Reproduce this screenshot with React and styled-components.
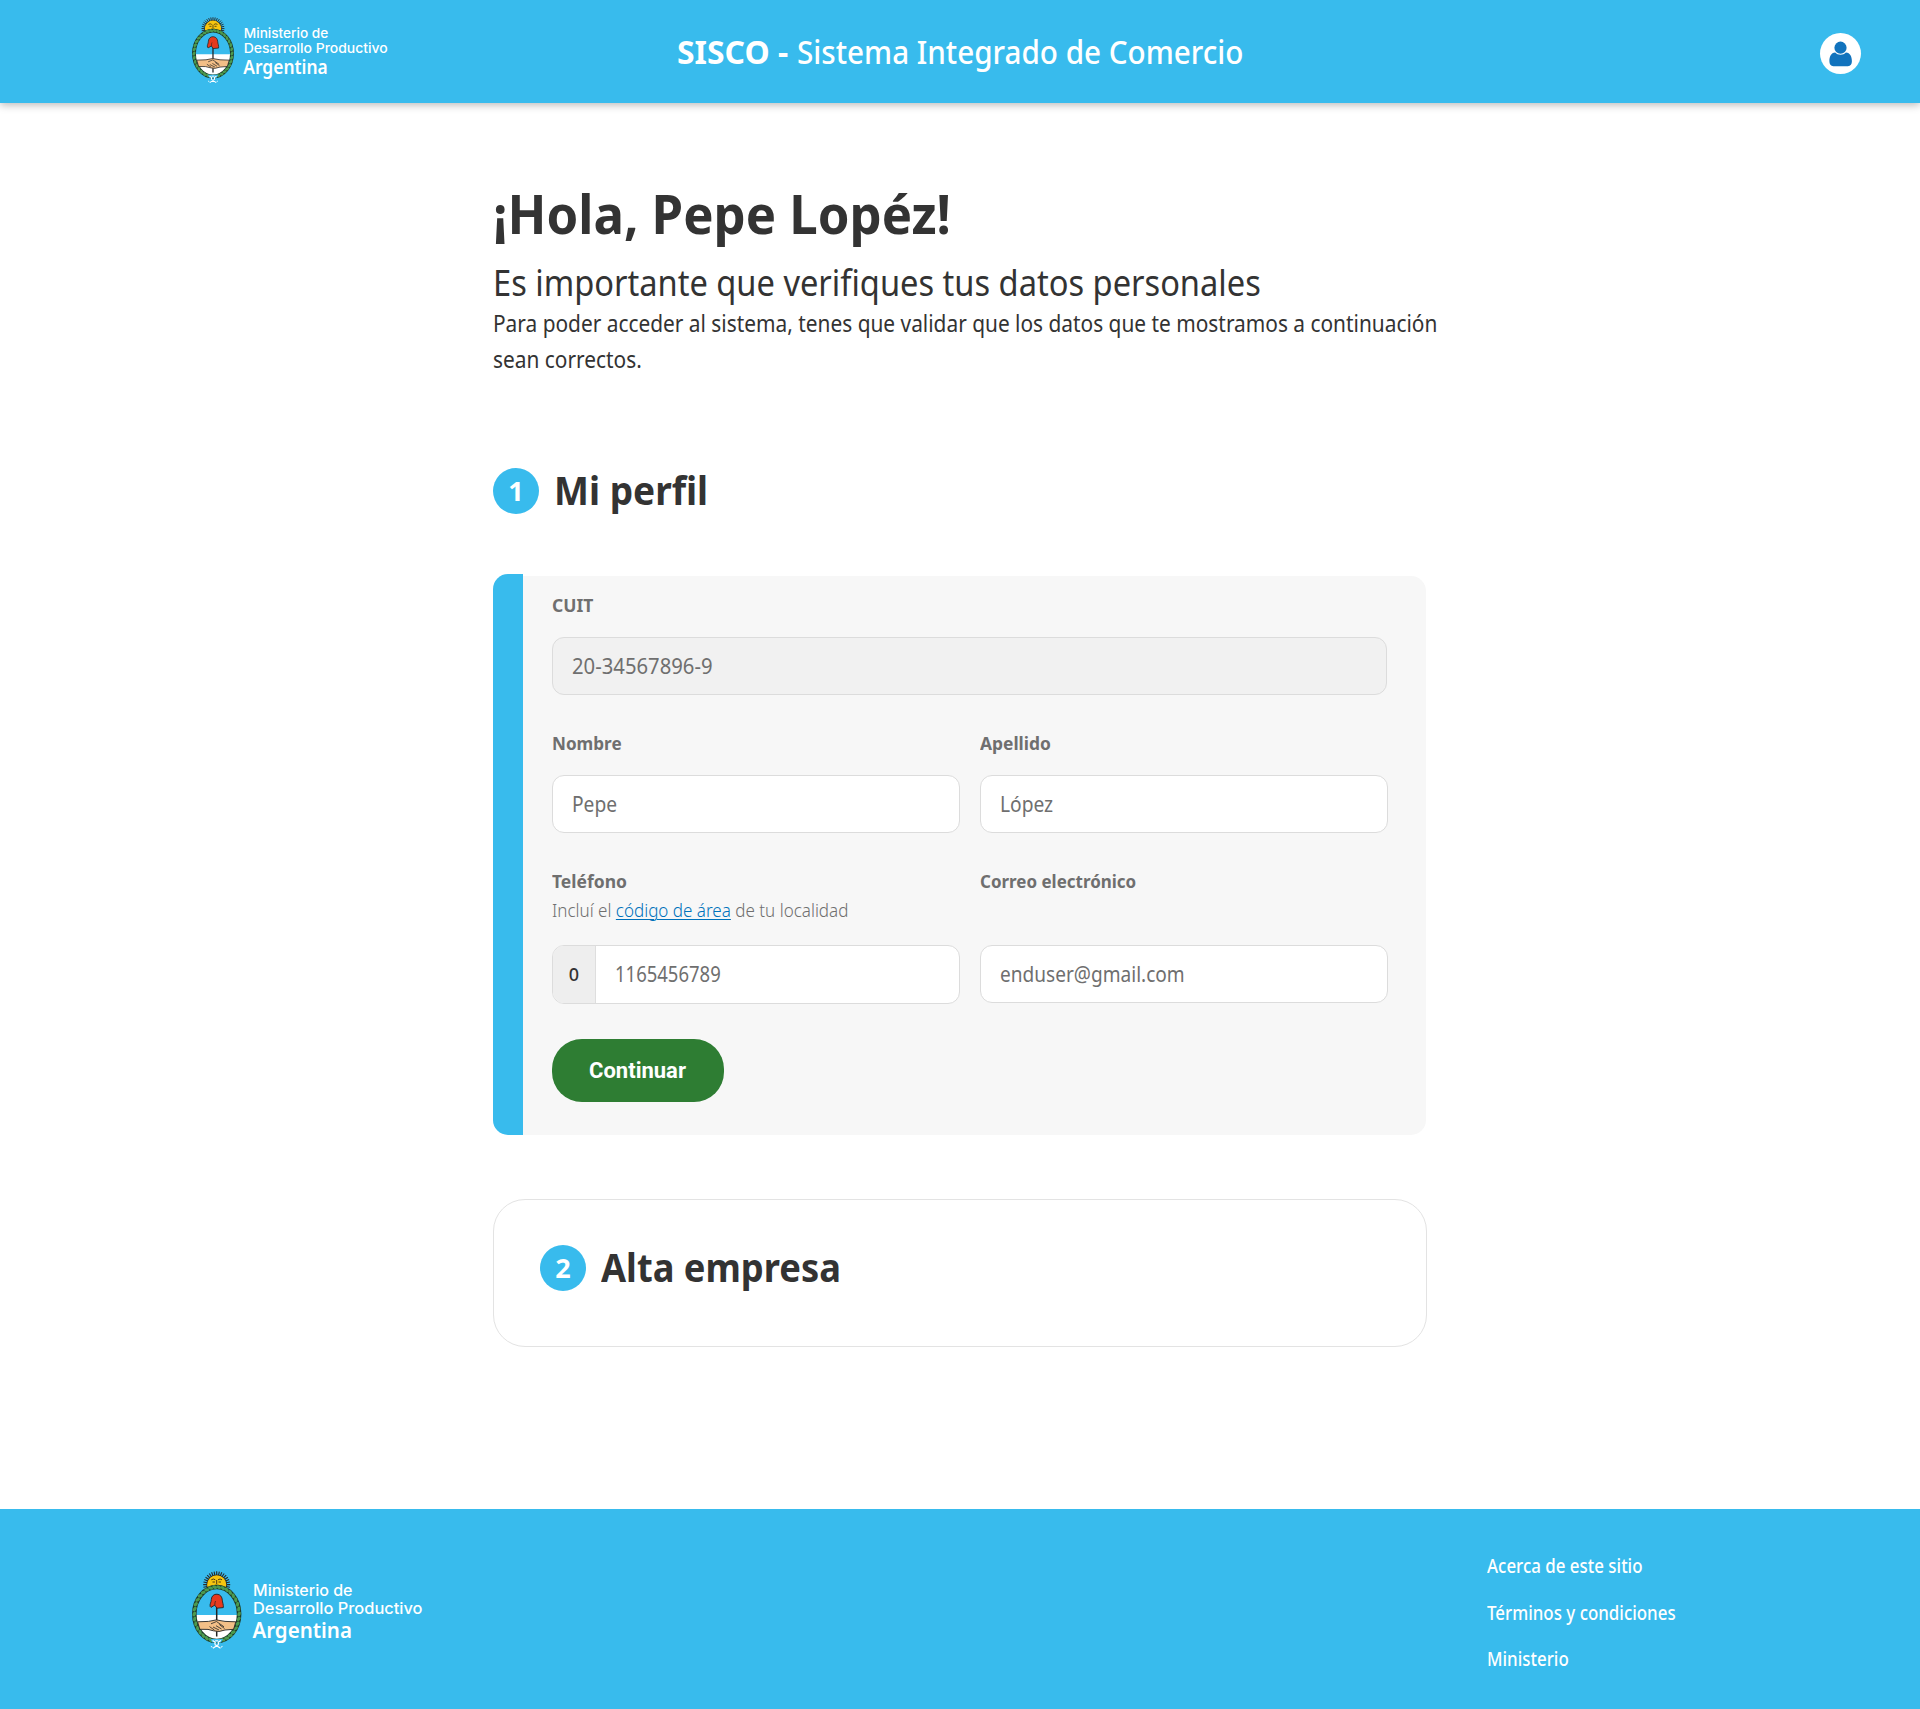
import React from 'react';
import styled, { createGlobalStyle } from 'styled-components';

const SKY = '#38bbed';
const INK = '#333333';
const GREY = '#6f6f6f';

const GlobalStyle = createGlobalStyle`
  *, *::before, *::after { box-sizing: border-box; }
  body { margin: 0; background: #fff; color: ${INK}; font-family: 'Noto Sans', 'Open Sans', sans-serif; }
  h1, h2, p { margin: 0; }
`;

/* Slightly condensed run of text */
const Narrow = styled.span`
  display: inline-block;
  white-space: nowrap;
  transform: scaleX(${p => p.$x});
  transform-origin: 0 50%;
`;

const Page = styled.div`
  display: flex;
  flex-direction: column;
  width: 1920px;
  min-height: 1709px;
  overflow: hidden;
`;

const Header = styled.header`
  display: grid;
  grid-template-columns: 485px 1fr auto;
  align-items: center;
  height: 103px;
  padding: 0 59px 0 192px;
  background: ${SKY};
  box-shadow: 0 2px 8px rgba(0, 0, 0, 0.28);
`;

const HeaderTitle = styled.div`
  display: flex;
  font-size: 33px;
  line-height: 44px;
  font-weight: 500;
  color: #fff;
`;

const Acronym = styled.strong`
  width: 120px;
  font-weight: 700;
  white-space: nowrap;
`;

const UserButton = styled.button`
  display: grid;
  place-items: center;
  width: 41px;
  height: 41px;
  margin-top: 4px;
  padding: 0;
  border: 0;
  border-radius: 50%;
  background: #fff;
`;

const HeaderLogo = styled.div`
  height: 70px;
`;

const Main = styled.main`
  width: 934px;
  margin: 78px 0 0 493px;
`;

const Greeting = styled.h1`
  font-size: 54px;
  line-height: 64px;
  font-weight: 700;
`;

const Subtitle = styled.p`
  margin-top: 15px;
  font-size: 36px;
  line-height: 45px;
`;

const Intro = styled.p`
  font-size: 23px;
  line-height: 36px;
`;

const StepTitle = styled.div`
  display: flex;
  gap: 15px;
  height: 46px;
`;

const StepNumber = styled.span`
  width: 46px;
  height: 46px;
  border-radius: 50%;
  background: ${SKY};
  color: #fff;
  font-size: 27px;
  line-height: 46px;
  font-weight: 700;
  text-align: center;
`;

const StepName = styled.h2`
  font-size: 40px;
  line-height: 43px;
  font-weight: 700;
`;

const ProfileStep = styled.section`
  margin-top: 91px;
`;

const ProfileCard = styled.div`
  display: flex;
  width: 933px;
  height: 561px;
  margin-top: 60px;
`;

const Accent = styled.div`
  width: 30px;
  border-radius: 15px 0 0 15px;
  background: ${SKY};
`;

const Form = styled.form`
  flex: 1;
  display: flex;
  flex-direction: column;
  align-items: flex-start;
  gap: 35px;
  margin-top: 2px;
  padding: 16px 38px 0 29px;
  border-radius: 0 15px 15px 0;
  background: #f7f7f7;
`;

const FieldRow = styled.div`
  display: grid;
  grid-template-columns: ${p => (p.$single ? '835px' : '1fr 1fr')};
  column-gap: 20px;
  width: 100%;
`;

const FieldHead = styled.div`
  height: ${p => (p.$tall ? 77 : 45)}px;
  color: ${GREY};
`;

const Label = styled.label`
  display: block;
  font-size: 18.5px;
  line-height: 26px;
  font-weight: 700;
`;

const Hint = styled.div`
  margin-top: 3px;
  font-size: 19px;
  line-height: 26px;
  font-weight: 300;
`;

const HintLink = styled.a`
  color: #0072bb;
  text-decoration: underline;
  text-decoration-thickness: 1px;
  text-underline-offset: 2px;
`;

const Control = styled.div`
  display: flex;
  height: ${p => (p.$prefixed ? 59 : 58)}px;
  border: 1px solid #dcdcdc;
  border-radius: 12px;
  overflow: hidden;
  background: ${p => (p.$disabled ? '#f1f1f1' : '#fff')};
  color: ${GREY};
  font-size: 21px;
  line-height: 56px;
`;

const Prefix = styled.span`
  width: 43px;
  border-right: 1px solid #dedede;
  background: #eeeeee;
  color: ${INK};
  font-size: 18px;
  font-weight: 500;
  text-align: center;
`;

const Value = styled.span`
  padding-left: 19px;
`;

const Submit = styled.button`
  width: 172px;
  height: 63px;
  padding: 0 1px 0 0;
  border: 0;
  border-radius: 30px;
  background: #2e7d33;
  color: #fff;
  font: 700 22px Roboto, sans-serif;
`;

const CompanyCard = styled.section`
  height: 148px;
  margin-top: 64px;
  padding: 45px 46px;
  border: 1px solid #e3e3e3;
  border-radius: 32px;
`;

const Footer = styled.footer`
  display: flex;
  justify-content: space-between;
  height: 200px;
  margin-top: auto;
  padding: 0 192px;
  background: ${SKY};
`;

const FooterLogo = styled.div`
  padding-top: 62px;
`;

const Links = styled.nav`
  display: flex;
  flex-direction: column;
  width: 241px;
  padding-top: 34px;
`;

const FooterLink = styled.a`
  height: 46.5px;
  color: #fff;
  font-size: 19px;
  line-height: 46px;
  font-weight: 500;
`;

const WREATH = Array.from({ length: 34 }, (_, i) => {
  const a = (i / 34) * Math.PI * 2;
  return { x: 24.7 + 22.4 * Math.cos(a), y: 43 + 27 * Math.sin(a), r: (a * 180) / Math.PI };
});
const RAYS = Array.from({ length: 21 }, (_, i) => Math.PI * (1.12 - (i / 20) * 1.24));

function Crest() {
  return (
    <g>
      {RAYS.map(a => (
        <path
          key={a}
          d={`M24.7 13.8L${24.7 + 13.5 * Math.cos(a)} ${13.8 - 13.5 * Math.sin(a)}`}
          stroke="#25292a"
          strokeWidth="1.1"
        />
      ))}
      <circle cx="24.7" cy="13.8" r="10.4" fill="#25292a" />
      <circle cx="24.7" cy="13.8" r="9.6" fill="#f6c50f" />
      <path d="M19.3 8.8q2.2-1.6 4 0M26 8.8q2.2-1.6 4 0M20.5 11h2.4M26.5 11h2.4M24.7 9v4M22.5 14.3h4.4" stroke="#4a3a12" strokeWidth="1" fill="none" />
      <ellipse cx="24.7" cy="43" rx="20.7" ry="25.6" fill={SKY} />
      <path d="M4 44H45.4C45.4 57 36 68.6 24.7 68.6S4 57 4 44Z" fill="#fff" />
      <ellipse cx="24.7" cy="43" rx="22.4" ry="27" fill="none" stroke="#1d3b2a" strokeWidth="4.6" />
      {WREATH.map((l, i) => (
        <ellipse key={i} cx={l.x} cy={l.y} rx="1.6" ry="2.5" fill="#4c9a4f" transform={`rotate(${l.r + 24} ${l.x} ${l.y})`} />
      ))}
      <path d="M24.7 36V65.5" stroke="#222" strokeWidth="1.5" />
      <path d="M18.2 35.5C17.5 33 19.3 31.5 19.3 28.5C19.5 25 22 23 25 23.2C28.4 23.4 30.2 26 30.3 29.2C30.4 31.5 31.7 33.6 31.3 36.6L25 37.2L22.7 34.2L19 36.4Z" fill="#e63a1e" stroke="#222" strokeWidth=".9" />
      <path d="M22.7 34.4C23.2 32.5 22.6 31.6 23.6 30" stroke="#222" strokeWidth=".7" fill="none" />
      <path d="M5.6 50.8L16.5 50.4L24.3 48.9L33 50.4L43.8 50.8L41.6 58.3L33 59Q26.5 61.6 21.5 59.8L16 58.4L7.8 58.3Z" fill="#f3bf87" stroke="#222" strokeWidth=".9" />
      <path d="M19 52.8L24.5 50.5L32 55.8M21 56L27 59M24 54.7L29.5 58M17.5 55.6L22.3 59M27.3 53.5L32.5 57.5" stroke="#222" strokeWidth=".8" fill="none" />
      <path d="M18.5 68L31 68L29 71.5L20.4 71.5Z" fill={SKY} />
      <path d="M20.6 69.6L23.2 71.2L22.8 73.4M28.8 69.6L26.2 71.2L26.6 73.4M22.8 73.4L28.5 77.3M26.6 73.4L20.9 77.3" stroke="#fff" strokeWidth="1.2" fill="none" />
      <path d="M20.4 76.2L18.9 75.4M29 76.2L30.5 75.4M23.2 69.8H26.2" stroke="#fff" strokeWidth="1" />
    </g>
  );
}

function MinistryLogo({ width }) {
  return (
    <svg width={width} height={(width * 80) / 232} viewBox="0 0 232 80" fill="none" role="img">
      <Crest />
      <g fill="#fff" fontFamily="Inter, 'Noto Sans', sans-serif" fontSize="15.6" fontWeight="500">
        <text x="61" y="24.6" textLength="99.5" lengthAdjust="spacingAndGlyphs">Ministerio de</text>
        <text x="61" y="42.6" textLength="169.5" lengthAdjust="spacingAndGlyphs">Desarrollo Productivo</text>
      </g>
      <text x="60.4" y="67" fill="#fff" fontFamily="'Noto Sans', sans-serif" fontSize="22.4" fontWeight="600" textLength="99.5" lengthAdjust="spacingAndGlyphs">
        Argentina
      </text>
    </svg>
  );
}

function Field({ label, scale = 0.925, hint, tall, disabled, prefix, value, valueScale = 0.914 }) {
  return (
    <div>
      <FieldHead $tall={tall}>
        <Label><Narrow $x={scale}>{label}</Narrow></Label>
        {hint}
      </FieldHead>
      <Control $disabled={disabled} $prefixed={Boolean(prefix)}>
        {prefix && <Prefix>{prefix}</Prefix>}
        <Value><Narrow $x={valueScale}>{value}</Narrow></Value>
      </Control>
    </div>
  );
}

export default function App() {
  return (
    <Page>
      <GlobalStyle />
      <Header>
        <HeaderLogo><MinistryLogo width={197} /></HeaderLogo>
        <HeaderTitle>
          <Acronym><Narrow $x={0.967}>SISCO -</Narrow></Acronym>
          <Narrow $x={0.898}>Sistema Integrado de Comercio</Narrow>
        </HeaderTitle>
        <UserButton aria-label="Usuario">
          <svg width="24" height="26" viewBox="0 0 24 26" fill="#1173bd">
            <circle cx="11.5" cy="6.7" r="6.1" />
            <path d="M6.2 11.6C7.6 13 9.4 13.8 11.5 13.8S15.5 13 16.9 11.6C21.2 11.9 22.9 15.7 22.9 20.3C22.9 23.2 21.6 25.2 18.9 25.2H4.4C1.7 25.2.4 23.2.4 20.3C.4 15.7 2 11.9 6.2 11.6Z" />
          </svg>
        </UserButton>
      </Header>

      <Main>
        <Greeting><Narrow $x={0.942}>¡Hola, Pepe Lopéz!</Narrow></Greeting>
        <Subtitle><Narrow $x={0.906}>Es importante que verifiques tus datos personales</Narrow></Subtitle>
        <Intro>
          <Narrow $x={0.907}>
            Para poder acceder al sistema, tenes que validar que los datos que te mostramos a continuación
            <br />
            sean correctos.
          </Narrow>
        </Intro>

        <ProfileStep>
          <StepTitle>
            <StepNumber>1</StepNumber>
            <StepName><Narrow $x={0.926}>Mi perfil</Narrow></StepName>
          </StepTitle>
          <ProfileCard>
            <Accent />
            <Form>
              <FieldRow $single>
                <Field label="CUIT" scale={0.945} value="20-34567896-9" valueScale={0.965} disabled />
              </FieldRow>
              <FieldRow>
                <Field label="Nombre" value="Pepe" />
                <Field label="Apellido" scale={0.94} value="López" />
              </FieldRow>
              <FieldRow>
                <Field
                  tall
                  label="Teléfono"
                  scale={0.945}
                  prefix="0"
                  value="1165456789"
                  valueScale={0.88}
                  hint={
                    <Hint>
                      <Narrow $x={0.896}>
                        Incluí el <HintLink>código de área</HintLink> de tu localidad
                      </Narrow>
                    </Hint>
                  }
                />
                <Field tall label="Correo electrónico" scale={0.917} value="enduser@gmail.com" valueScale={0.908} />
              </FieldRow>
              <Submit type="button">Continuar</Submit>
            </Form>
          </ProfileCard>
        </ProfileStep>

        <CompanyCard>
          <StepTitle>
            <StepNumber>2</StepNumber>
            <StepName><Narrow $x={0.907}>Alta empresa</Narrow></StepName>
          </StepTitle>
        </CompanyCard>
      </Main>

      <Footer>
        <FooterLogo><MinistryLogo width={232} /></FooterLogo>
        <Links>
          {['Acerca de este sitio', 'Términos y condiciones', 'Ministerio'].map(t => (
            <FooterLink key={t}><Narrow $x={0.89}>{t}</Narrow></FooterLink>
          ))}
        </Links>
      </Footer>
    </Page>
  );
}
